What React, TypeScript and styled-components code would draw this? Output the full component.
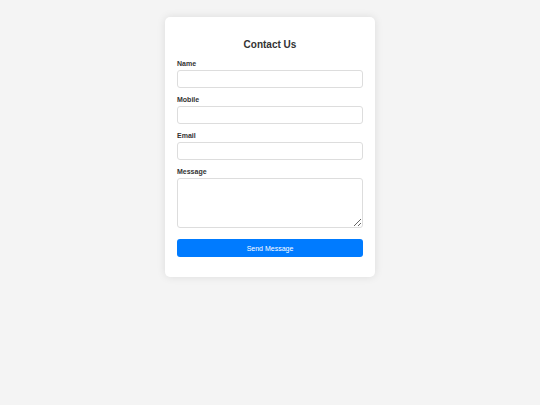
import React from 'react';
import styled, { createGlobalStyle } from 'styled-components';

const GlobalStyle = createGlobalStyle`
  html, body {
    margin: 0;
    padding: 0;
    background: #f4f4f4;
    font-family: "Liberation Sans", Arial, sans-serif;
  }
`;

const Page = styled.div`
  min-height: 405px;
  display: flex;
  justify-content: center;
  align-items: flex-start;
  padding-top: 17px;
  box-sizing: border-box;
`;

const Card = styled.form`
  width: 210px;
  box-sizing: border-box;
  background: #fff;
  border-radius: 5px;
  box-shadow: 0 0 8px rgba(0, 0, 0, 0.1);
  padding: 12px 12px 20px;
  display: flex;
  flex-direction: column;
`;

const Title = styled.h2`
  margin: 9px 0 7px;
  font-size: 10px;
  line-height: 14px;
  font-weight: bold;
  text-align: center;
  color: #333;
`;

const Field = styled.div`
  display: flex;
  flex-direction: column;
  margin-bottom: 7px;
`;

const Label = styled.label`
  font-size: 7px;
  line-height: 9px;
  font-weight: bold;
  color: #333;
  margin-bottom: 2px;
`;

const Input = styled.input`
  height: 18px;
  box-sizing: border-box;
  border: 1px solid #ddd;
  border-radius: 3px;
  padding: 0 4px;
  font-size: 7px;
  font-family: inherit;
  outline: none;
`;

const TextArea = styled.textarea`
  height: 50px;
  box-sizing: border-box;
  border: 1px solid #ddd;
  border-radius: 3px;
  padding: 4px;
  font-size: 7px;
  font-family: inherit;
  outline: none;
`;

const Submit = styled.button`
  margin-top: 4px;
  height: 18px;
  border: none;
  border-radius: 3px;
  background: #007bff;
  color: #fff;
  font-size: 7px;
  font-family: inherit;
  cursor: pointer;
`;

const App: React.FC = () => {
  return (
    <>
      <GlobalStyle />
      <Page>
        <Card onSubmit={(e) => e.preventDefault()}>
          <Title>Contact Us</Title>
          <Field>
            <Label>Name</Label>
            <Input type="text" />
          </Field>
          <Field>
            <Label>Mobile</Label>
            <Input type="tel" />
          </Field>
          <Field>
            <Label>Email</Label>
            <Input type="email" />
          </Field>
          <Field>
            <Label>Message</Label>
            <TextArea />
          </Field>
          <Submit type="submit">Send Message</Submit>
        </Card>
      </Page>
    </>
  );
};

export default App;
